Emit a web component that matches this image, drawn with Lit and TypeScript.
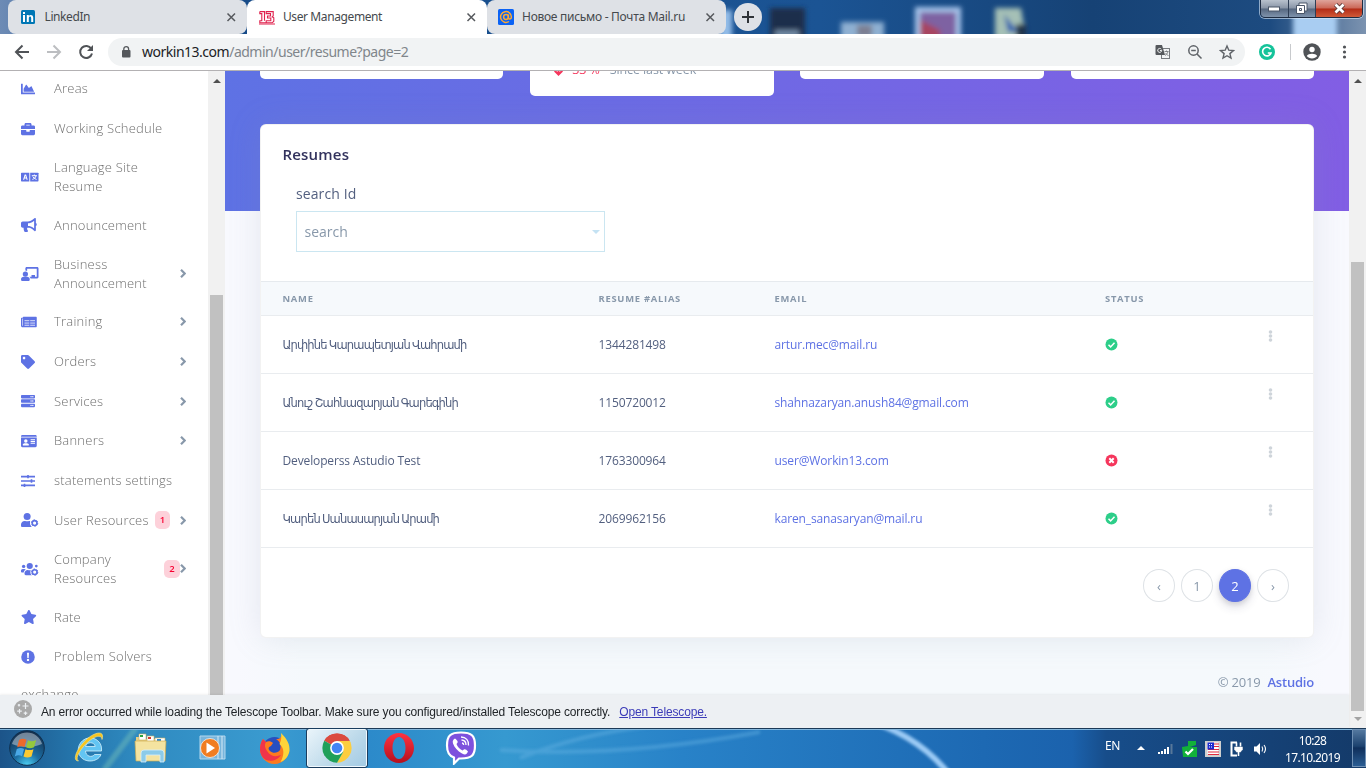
import { LitElement, html, css, svg, nothing } from "lit";
import { customElement, property } from "lit/decorators.js";

const FA_CHART =
  "M500 384c6.6 0 12 5.4 12 12v40c0 6.6-5.4 12-12 12H12c-6.6 0-12-5.4-12-12V76c0-6.6 5.4-12 12-12h40c6.6 0 12 5.4 12 12v308h436zM372.7 159.5L288 216l-85.3-113.7c-5.1-6.8-15.5-6.3-19.9 1L96 248v104h384l-89.9-187.8c-3.2-6.5-11.4-8.7-17.4-4.7z";
const FA_BRIEFCASE =
  "M320 336c0 8.84-7.16 16-16 16h-96c-8.84 0-16-7.16-16-16v-48H0v144c0 25.6 22.4 48 48 48h416c25.6 0 48-22.4 48-48V288H320v48zm144-208h-80V80c0-25.6-22.4-48-48-48H176c-25.6 0-48 22.4-48 48v48H48c-25.6 0-48 22.4-48 48v80h512v-80c0-25.6-22.4-48-48-48zm-144 0H192V96h128v32z";
const FA_BULLHORN =
  "M576 240c0-23.63-12.95-44.04-32-55.12V32.01C544 23.26 537.02 0 512 0c-7.12 0-14.19 2.38-19.98 7.02l-85.03 68.03C364.28 109.19 310.66 128 256 128H64c-35.35 0-64 28.65-64 64v96c0 35.35 28.65 64 64 64h33.7c-1.39 10.48-2.18 21.14-2.18 32 0 39.77 9.26 77.35 25.56 110.94 5.19 10.69 16.52 17.06 28.4 17.06h74.28c26.05 0 41.69-29.84 25.9-50.56-16.4-21.52-26.15-48.36-26.15-77.44 0-11.11 1.62-21.79 4.41-32H256c54.66 0 108.28 18.81 150.98 52.95l85.03 68.03a32.023 32.023 0 0 0 19.98 7.02c24.92 0 32-22.78 32-32V295.13C563.05 284.04 576 263.63 576 240zm-96 141.42l-33.05-26.44C392.95 311.78 325.12 288 256 288v-96c69.12 0 136.95-23.78 190.95-66.98L480 98.58v282.84z";
const FA_TAG =
  "M0 252.118V48C0 21.49 21.49 0 48 0h204.118a48 48 0 0 1 33.941 14.059l211.882 211.882c18.745 18.745 18.745 49.137 0 67.882L293.823 497.941c-18.745 18.745-49.137 18.745-67.882 0L14.059 286.059A48 48 0 0 1 0 252.118zM112 64c-26.51 0-48 21.49-48 48s21.49 48 48 48 48-21.49 48-48-21.49-48-48-48z";
const FA_STAR =
  "M259.3 17.8L194 150.2 47.9 171.5c-26.2 3.8-36.7 36.1-17.7 54.6l105.7 103-25 145.5c-4.5 26.3 23.2 46 46.4 33.7L288 439.6l130.7 68.7c23.2 12.2 50.9-7.4 46.4-33.7l-25-145.5 105.7-103c19-18.5 8.5-50.8-17.7-54.6L382 150.2 316.7 17.8c-11.7-23.6-45.6-23.9-57.4 0z";

const gear = (cx: number, cy: number) => svg`
  <circle cx=${cx} cy=${cy} r="88" fill="none" stroke="currentColor" stroke-width="60"/>
  <circle cx=${cx} cy=${cy} r="116" fill="none" stroke="currentColor" stroke-width="34" stroke-dasharray="61 60.5"/>`;

/* width in em-units of 512 followed by the glyph's drawing */
const ICONS: Record<string, [number, unknown]> = {
  chart: [512, svg`<path d=${FA_CHART}/>`],
  briefcase: [512, svg`<path d=${FA_BRIEFCASE}/>`],
  bullhorn: [576, svg`<path d=${FA_BULLHORN}/>`],
  tag: [512, svg`<path d=${FA_TAG}/>`],
  star: [576, svg`<path d=${FA_STAR}/>`],
  language: [640, svg`<path fill-rule="evenodd" d="M24 96h280v320H24c-13 0-24-11-24-24V120c0-13 11-24 24-24zM135 160L75 352h42l12-40h62l12 40h42l-60-192zm25 50l20 66h-40z"/>
    <path d="M336 96h280c13 0 24 11 24 24v272c0 13-11 24-24 24H336z"/>
    <path d="M395 208h186M488 165v43M550 212c-14 60-66 112-134 132M432 245c30 48 78 84 136 100" fill="none" stroke="#fff" stroke-width="36"/>`],
  teacher: [640, svg`<circle cx="160" cy="256" r="96"/><path d="M224 352h-64H96c-53 0-96 43-96 96 0 40 20 64 40 64h240c22 0 40-24 40-64 0-53-43-96-96-96z"/>
    <path d="M592 0H208c-26 0-48 22-48 49v79c24 0 45 7 64 17V64h352v288h-64v-64H384v64h-76c20 17 35 39 44 64h240c26 0 48-22 48-49V49c0-27-22-49-48-49z"/>`],
  news: [576, svg`<path d="M552 64H88c-13 0-24 11-24 24v8H24c-13 0-24 11-24 24v272c0 31 25 56 56 56h496c13 0 24-11 24-24V88c0-13-11-24-24-24z"/>
    <path d="M56 130v262" stroke="#fff" stroke-width="22"/>
    <path d="M128 208h176M336 208h176M128 295h176M336 295h176M128 375h176M336 375h176" stroke="#fff" stroke-width="28"/>`],
  server: [512, svg`<rect y="32" width="512" height="128" rx="28"/><rect y="192" width="512" height="128" rx="28"/><rect y="352" width="512" height="128" rx="28"/>
    <g fill="#fff"><circle cx="368" cy="96" r="24"/><circle cx="432" cy="96" r="24"/><circle cx="368" cy="256" r="24"/><circle cx="432" cy="256" r="24"/><circle cx="368" cy="416" r="24"/><circle cx="432" cy="416" r="24"/></g>`],
  idcard: [576, svg`<path d="M528 32H48C22 32 0 54 0 80v16h576V80c0-26-22-48-48-48zM0 432c0 26 22 48 48 48h480c26 0 48-22 48-48V128H0z"/>
    <g fill="#fff"><circle cx="176" cy="256" r="64"/><path d="M64 397c0-30 30-58 70-58h84c40 0 70 28 70 58 0 12-5 19-12 19H76c-7 0-12-8-12-19z"/><path d="M352 192h160v32H352zM352 256h160v32H352zM352 320h160v32H352z"/></g>`],
  sliders: [512, svg`<path d="M0 96h512M0 256h512M0 416h512" stroke="currentColor" stroke-width="56"/>
    <path d="M256 36v120M384 196v120M128 356v120" stroke="currentColor" stroke-width="60"/>`],
  usercog: [640, svg`<circle cx="224" cy="128" r="128"/><path d="M313 288h-17a174 174 0 0 1-146 0h-16C60 288 0 348 0 422v42c0 26 22 48 48 48h368c-60-30-90-90-83-222z"/>
    <circle cx="497" cy="368" r="160" fill="#fff"/>${gear(497, 368)}`],
  userscog: [640, svg`<circle cx="96" cy="160" r="62"/><path d="M64 256h64c18 0 35 8 47 20-40 22-70 62-76 108H32c-18 0-32-14-32-32v-32c0-35 29-64 64-64z"/>
    <circle cx="320" cy="144" r="112"/><circle cx="560" cy="150" r="50"/><path d="M396 288h-8a156 156 0 0 1-137 0h-8c-64 0-115 52-115 115v29c0 26 21 48 48 48h290z"/>
    <circle cx="500" cy="370" r="160" fill="#fff"/>${gear(500, 370)}`],
  alert: [512, svg`<circle cx="256" cy="256" r="248"/><path d="M218 105h76l-12 190h-52z" fill="#fff"/><circle cx="256" cy="362" r="44" fill="#fff"/>`],
};

interface NavItem { icon?: string; label: string; lines?: number; arrow?: boolean; badge?: number; }
const NAV: NavItem[] = [
  { icon: "chart", label: "Areas" },
  { icon: "briefcase", label: "Working Schedule" },
  { icon: "language", label: "Language Site Resume", lines: 2 },
  { icon: "bullhorn", label: "Announcement" },
  { icon: "teacher", label: "Business Announcement", lines: 2, arrow: true },
  { icon: "news", label: "Training", arrow: true },
  { icon: "tag", label: "Orders", arrow: true },
  { icon: "server", label: "Services", arrow: true },
  { icon: "idcard", label: "Banners", arrow: true },
  { icon: "sliders", label: "statements settings" },
  { icon: "usercog", label: "User Resources", arrow: true, badge: 1 },
  { icon: "userscog", label: "Company Resources", lines: 2, arrow: true, badge: 2 },
  { icon: "star", label: "Rate" },
  { icon: "alert", label: "Problem Solvers" },
  { label: "exchange" },
];

@customElement("side-nav")
class SideNav extends LitElement {
  static styles = css`
    :host { display: flex; width: 225px; height: 100%; overflow: hidden; background: #fff; }
    .list { width: 208px; height: 100%; margin-top: -2px; flex: none; }
    .item { display: flex; align-items: center; height: 39.7px; padding-left: 21px; box-sizing: border-box; color: #6f6f6f;
      font: 300 13px/19px "Open Sans", sans-serif; letter-spacing: .22px; }
    .item.two { height: 57px; }
    .icon { width: 33px; flex: none; display: flex; color: #5e72e4; }
    .icon svg { height: 14px; fill: currentColor; overflow: visible; }
    .label { width: 94px; flex: none; white-space: nowrap; }
    .two .label { white-space: normal; width: 100px; }
    .end { flex: 1; display: flex; align-items: center; justify-content: flex-end; padding-right: 22px; }
    .badge { width: 15px; height: 18px; border-radius: 5px; background: #fdd1da; color: #f80031; text-align: center;
      font: 600 9.5px/18px "Open Sans", sans-serif; margin-right: 10px; letter-spacing: 0; }
    .two .badge { margin-right: 0; width: 16px; }
    .exchange { height: 35px; }
    .bar { width: 17px; background: #f1f1f1; display: flex; flex-direction: column; align-items: center; }
    .up { width: 0; height: 0; margin: 8px 0 0 0; border: 4px solid transparent; border-top: 0; border-bottom: 4px solid #505050; }
    .thumb { width: 13px; margin-top: 212px; height: 450px; background: #c1c1c1; }
  `;
  render() {
    return html`
      <div class="list">
        ${NAV.map((n) => html`<div class="item ${n.lines ? "two" : ""} ${n.icon ? "" : "exchange"}">
          ${n.icon ? html`<span class="icon"><svg viewBox="0 0 ${ICONS[n.icon][0]} 512">${ICONS[n.icon][1]}</svg></span>` : nothing}
          <span class="label">${n.label}</span>
          <span class="end">
            ${n.badge ? html`<span class="badge">${n.badge}</span>` : nothing}
            ${n.arrow ? html`<svg width="6" height="9" viewBox="0 0 6 9"><path d="M1 .8L4.7 4.5 1 8.2" fill="none" stroke="#8898aa" stroke-width="2.200"/></svg>` : nothing}
          </span>
        </div>`)}
      </div>
      <div class="bar"><i class="up"></i><i class="thumb"></i></div>`;
  }
}

interface Row { name: string; alias: string; email: string; ok: boolean; hy?: boolean; }
const ROWS: Row[] = [
  { name: "Արփինե Կարապետյան Վահրամի", alias: "1344281498", email: "artur.mec@mail.ru", ok: true, hy: true },
  { name: "Անուշ Շահնազարյան Գարեգինի", alias: "1150720012", email: "shahnazaryan.anush84@gmail.com", ok: true, hy: true },
  { name: "Developerss Astudio Test", alias: "1763300964", email: "user@Workin13.com", ok: false },
  { name: "Կարեն Սանասարյան Արամի", alias: "2069962156", email: "karen_sanasaryan@mail.ru", ok: true, hy: true },
];

@customElement("resume-page")
class ResumePage extends LitElement {
  static styles = css`
    :host { display: block; flex: 1; min-width: 0; height: 100%; overflow: hidden; background: #f8f9fe; font-family: "Open Sans", "DejaVu Sans", sans-serif; }
    .hero { height: 140px; padding: 0 35px; box-sizing: border-box; background: linear-gradient(87deg, #5e72e4, #825ee4); }
    .stats { display: grid; grid-template-columns: repeat(4, 243.4px); justify-content: space-between; align-items: start; height: 53px; }
    .stat { height: 8px; background: #fff; border-radius: 0 0 5px 5px; overflow: hidden; }
    .stat.tall { height: 25px; display: flex; padding-left: 24px; font-size: 12.5px; line-height: 16px; color: #8898aa; letter-spacing: -.1px; }
    .tall span { margin-top: -9px; white-space: pre; }
    .tall svg { margin: -7px 9px 0 0; }
    .pct { color: #f5365c; margin-right: 10px; }
    .card { position: relative; z-index: 1; margin: -87px 35px 0; height: 514px; box-sizing: border-box; background: #fff; border: 1px solid rgba(0,0,0,.05); border-radius: 6px;
      box-shadow: 0 0 32px rgba(136,152,170,.18); display: flex; flex-direction: column; }
    .title { margin: 20px 0 0 21.500px; font: 600 15px/18px "Open Sans", sans-serif; color: #32325d; height: 18px; letter-spacing: .2px; }
    .field { margin: 21px 0 29px 35px; width: 309px; height: 68px; }
    .flabel { display: block; height: 27px; font-size: 14px; line-height: 20px; color: #525f7f; letter-spacing: .1px; }
    .select { display: flex; justify-content: space-between; align-items: center; height: 41px; box-sizing: border-box; border: 1px solid #cbe6f1;
      padding: 0 4px 0 7.5px; font-size: 14px; color: #8898aa; }
    .caret { border: 4px solid transparent; border-top: 4px solid #c4e2f3; border-bottom: 0; }
    .row { display: grid; grid-template-columns: 316px 176px 330.5px 162.5px 1fr; padding-left: 21.5px; height: 58px; box-sizing: border-box; align-items: center;
      border-bottom: 1px solid #e9ecef; font-size: 12px; color: #525f7f; letter-spacing: -.13px; }
    .hy { font-size: 11.5px; letter-spacing: -.83px; }
    .head { height: 35px; border-top: 1px solid #e6eaee; background: #f6f9fc; color: #8898aa; font-size: 9.4px; font-weight: 700; letter-spacing: .75px; }
    .mail { color: #5e72e4; }
    .dots { align-self: start; margin-top: 14px; }
    svg { display: block; }
    .pages { display: flex; justify-content: flex-end; gap: 6px; padding: 21px 24px 0 0; }
    .page { width: 32px; height: 33px; border: 1px solid #dee2e6; border-radius: 50%; box-sizing: border-box; display: grid; place-items: center; color: #8898aa; font-size: 13px; line-height: 16px; }
    .page.on { background: #5e72e4; border-color: #5e72e4; color: #fff; box-shadow: 0 5px 10px rgba(50,50,93,.16), 0 2px 5px rgba(0,0,0,.1); }
    .foot { padding: 35px 35px 0; height: 90px; display: flex; justify-content: flex-end; gap: 7px; box-sizing: border-box; font-size: 13px; line-height: 19px; color: #8898aa; letter-spacing: -.2px;
      background: linear-gradient(90deg, rgba(245,249,252,0) 1%, #f5f9fc 7%, #f5f9fc 92%, rgba(245,249,252,0) 98%); }
    .foot b { font-weight: 600; color: #5e72e4; }
  `;
  render() {
    return html`
      <div class="hero">
        <div class="stats">
          <div class="stat"></div>
          <div class="stat tall">
            <svg width="9" height="12" viewBox="0 0 9 12"><path d="M4.5 12L0 7.5 1.3 6.2 3.6 8V0h1.8v8l2.300-1.800L9 7.500z" fill="#f5365c"/></svg>
            <span class="pct">33 %</span><span>Since last week</span>
          </div>
          <div class="stat"></div>
          <div class="stat"></div>
        </div>
      </div>
      <div class="card">
        <div class="title">Resumes</div>
        <div class="field">
          <span class="flabel">search Id</span>
          <div class="select"><span>search</span><i class="caret"></i></div>
        </div>
        <div class="row head"><span>NAME</span><span>RESUME #ALIAS</span><span>EMAIL</span><span>STATUS</span></div>
        ${ROWS.map((r) => html`<div class="row">
          <span class=${r.hy ? "hy" : ""}>${r.name}</span><span>${r.alias}</span><span class="mail">${r.email}</span>
          <svg width="13" height="13" viewBox="0 0 13 13"><circle cx="6.500" cy="6.500" r="6" fill=${r.ok ? "#2dce89" : "#f5365c"}/>
            <path d=${r.ok ? "M3.500 6.800L5.600 8.900 9.500 4.700" : "M4.300 4.300L8.700 8.700M8.700 4.300L4.300 8.700"} fill="none" stroke="#fff" stroke-width=${r.ok ? 1.5 : 2}/></svg>
          <svg class="dots" width="5" height="12" viewBox="0 0 5 12" fill="#ced4da"><circle cx="2.500" cy="2" r="1.800"/><circle cx="2.500" cy="6" r="1.800"/><circle cx="2.500" cy="10" r="1.800"/></svg>
        </div>`)}
        <div class="pages"><span class="page">‹</span><span class="page">1</span><span class="page on">2</span><span class="page">›</span></div>
      </div>
      <div class="foot"><span>© 2019</span><b>Astudio</b></div>`;
  }
}

@customElement("browser-tab")
class BrowserTab extends LitElement {
  @property() label = "";
  @property() kind = "";
  static styles = css`
    :host { display: flex; align-items: center; width: 239.500px; height: 34px; box-sizing: border-box; padding: 0 10px 0 13px; background: #dee1e6; border-radius: 8px; flex: none; }
    :host([kind="w13"]) { background: #fff; border-radius: 8px 8px 0 0; padding-left: 12px; }
    :host([kind="mail"]) { padding-left: 11.500px; }
    svg { flex: none; }
    .t { flex: 1; padding-left: 7px; font: 12px/16px "Noto Sans", "Open Sans", sans-serif; letter-spacing: -.4px; color: #45494d; white-space: nowrap; }
    :host([kind="mail"]) .t { letter-spacing: -.28px; }
  `;
  favicon() {
    if (this.kind === "in")
      return svg`<rect x="0" y="1" width="14" height="14" rx="1.500" fill="#0077b5"/><g fill="#fff"><rect x="2" y="6" width="2" height="7"/><rect x="2" y="3" width="2" height="2"/><path d="M5.800 6h2v1c1-1.600 4.400-1.600 4.400 1.600V13h-2V9.200c0-2.200-2.400-2-2.400 0V13h-2z"/></g>`;
    if (this.kind === "w13")
      return svg`<path d="M.8 2.600h4.700v9.200M.8 2.600v2h2v7.200H.8v2h6M7.200 2.600h7v4.200l-1 1 1.600 1v3.400l-1.600 1.600H7.200v-2h4.600V9H8.500V7h3V4.600H7.200z" fill="#fff" stroke="#e0224e" stroke-width="1.100"/><path d="M0 15h16" stroke="#e0224e"/>`;
    return svg`<rect width="16" height="16" rx="1.500" fill="#0a62f5"/><g fill="none" stroke="#ffa930" stroke-width="1.500"><circle cx="8" cy="8" r="2.400"/><path d="M10.400 5.500v3c0 2.400 3 2 3-.5a5.400 5.400 0 1 0-2.400 4.500"/></g>`;
  }
  render() {
    return html`<svg width="17" height="16" viewBox="0 0 17 16">${this.favicon()}</svg><span class="t">${this.label}</span>
      <svg width="11" height="11" viewBox="0 0 11 11"><path d="M1.500 1.500l7.500 7.500M9 1.500L1.500 9" stroke="#55585c" stroke-width="1.500"/></svg>`;
  }
}

@customElement("browser-chrome")
class BrowserChrome extends LitElement {
  static styles = css`
    :host { display: block; flex: none; }
    .top { display: grid; height: 34px; overflow: hidden; }
    .top > * { grid-area: 1 / 1; }
    .strip { display: flex; align-items: center; padding-left: 7.500px; }
    .plus { width: 28px; height: 28px; border-radius: 50%; background: #dee1e6; margin-left: 8px; display: grid; place-items: center; }
    .win { margin: 0 3px auto auto; display: flex; height: 17px; border: 1px solid #1e2c42; border-top: 0; border-radius: 0 0 5px 5px; overflow: hidden; box-shadow: 0 0 0 1px rgba(220,235,250,.6); }
    .win span { width: 26.500px; border-right: 1px solid #2f3e55; display: grid; place-items: center; background: linear-gradient(#b8c1cd, #8894a6 48%, #56677f 52%, #7f93ac); }
    .win .x { width: 46px; border: 0; background: linear-gradient(#dfa49b, #cb6757 48%, #b32c17 52%, #d05a38); }
    .bar { height: 36px; background: #fff; display: flex; align-items: center; border-bottom: 1px solid #b3b1b3; }
    .bar svg { flex: none; }
    .btns { display: flex; gap: 16px; padding-left: 14px; width: 108px; box-sizing: border-box; }
    .url { width: 1137px; box-sizing: border-box; height: 28px; border-radius: 14px; background: #f1f3f4; display: flex; align-items: center; gap: 16px; padding: 0 10px 0 11px; }
    .addr { flex: 1; margin-left: -7px; font: 14px/20px "Noto Sans", "Open Sans", sans-serif; letter-spacing: -.49px; color: #80868b; }
    .addr b { font-weight: 400; color: #202124; }
    .ext { display: flex; align-items: center; padding-left: 14px; }
    .sep { width: 1px; height: 16px; background: #c8cacd; margin: 0 12px 0 15px; }
    .more { margin-left: 21px; }
  `;
  render() {
    return html`
      <div class="top">
        <svg width="1366" height="34">
          <defs>
            <linearGradient id="sky"><stop offset="0" stop-color="#6d8bb5"/><stop offset=".02" stop-color="#5d7fae"/><stop offset=".18" stop-color="#174b88"/><stop offset=".6" stop-color="#1b5494"/><stop offset=".8" stop-color="#164275"/><stop offset=".93" stop-color="#1d4b80"/><stop offset="1" stop-color="#7c93b0"/></linearGradient>
            <filter id="soft" filterUnits="userSpaceOnUse" x="680" y="-10" width="690" height="60"><feGaussianBlur stdDeviation="2.800"/></filter>
          </defs>
          <rect width="1366" height="34" fill="url(#sky)"/>
          <g filter="url(#soft)">
            <rect x="720" y="10" width="12" height="34" fill="#93bce8"/>
            <rect x="770" y="8" width="35" height="36" fill="#1c2f4b"/><rect x="775" y="30" width="24" height="8" fill="#7088a3"/>
            <rect x="841" y="22" width="43" height="22" fill="#8fb0d2"/><rect x="857" y="25" width="15" height="12" fill="#7c7f92"/>
            <rect x="915" y="7" width="46" height="40" fill="#a8c6ec"/><rect x="920" y="12" width="36" height="30" fill="#7e62a2"/><path d="M920 20l20 10v10h-20z" fill="#a74461"/>
            <path d="M995 8h26l6 36h-32z" fill="#a5c0b6"/><path d="M1004 14l14 18h-10z" fill="#2c5fae"/><rect x="1016" y="24" width="10" height="20" fill="#22354c"/>
            <rect x="1293" y="14" width="44" height="30" fill="#a9cdf2"/>
          </g>
        </svg>
        <div class="strip">
          <browser-tab kind="in" label="LinkedIn"></browser-tab>
          <browser-tab kind="w13" label="User Management"></browser-tab>
          <browser-tab kind="mail" label="Новое письмо - Почта Mail.ru"></browser-tab>
          <div class="plus"><svg width="14" height="14"><path d="M7 1v12M1 7h12" stroke="#2f3337" stroke-width="2"/></svg></div>
          <div class="win">
            <span><svg width="12" height="6"><rect x=".5" y="1" width="11" height="4" fill="#fff" stroke="#4a5668"/></svg></span>
            <span><svg width="13" height="13"><g fill="#fff" stroke="#4a5668" fill-rule="evenodd"><path d="M4 1h8v8H4z"/><path d="M1.500 3.500h8v8h-8zM4.500 6.500v2h2v-2z"/></g></svg></span>
            <span class="x"><svg width="13" height="11"><path d="M2.500 1.500l8 8M10.500 1.500l-8 8" stroke="#5b3a3a" stroke-width="4.500"/><path d="M2.500 1.500l8 8M10.500 1.500l-8 8" stroke="#fff" stroke-width="2.700"/></svg></span>
          </div>
        </div>
      </div>
      <div class="bar">
        <div class="btns">
          <svg width="16" height="16"><path d="M15 8H2M8.500 1.500L2 8l6.500 6.500" fill="none" stroke="#505357" stroke-width="2"/></svg>
          <svg width="16" height="16"><path d="M1 8h13M7.500 1.500L14 8l-6.500 6.500" fill="none" stroke="#bcbec1" stroke-width="2"/></svg>
          <svg width="16" height="16"><path d="M13.300 4.800A6 6 0 1 0 14 9.500" fill="none" stroke="#505357" stroke-width="2"/><path d="M15 1v6H9z" fill="#505357"/></svg>
        </div>
        <div class="url">
          <svg width="14" height="14" viewBox="0 0 14 14"><rect x="3" y="5" width="8.500" height="7.500" rx="1" fill="#55585c"/><path d="M4.800 6V4a2.400 2.400 0 0 1 4.800 0v2" fill="none" stroke="#55585c" stroke-width="1.300"/></svg>
          <span class="addr"><b>workin13.com</b>/admin/user/resume?page=2</span>
          <svg width="16" height="16"><rect x="6.500" y="4.500" width="8" height="10" fill="#f1f3f4" stroke="#777a7e"/><path d="M1.500 1h5.500l3 10H1.500a1 1 0 0 1-1-1V2a1 1 0 0 1 1-1z" fill="#55585c"/><path d="M6.300 5.200A2 2 0 1 0 6.700 6.500H5" fill="none" stroke="#f1f3f4"/><path d="M9.500 7.500h4M11.500 6.500v1M13 7.500c-.5 2-1.500 3-3 4M10.500 9l3 3" fill="none" stroke="#777a7e" stroke-width=".9"/></svg>
          <svg width="16" height="16"><circle cx="6.500" cy="6.500" r="4.700" fill="none" stroke="#5f6368" stroke-width="1.500"/><path d="M10 10l4.500 4.500M4.200 6.500h4.600" stroke="#5f6368" stroke-width="1.500"/></svg>
          <svg width="16" height="16"><path d="M8 2l1.800 4.200 4.600.4-3.500 3 1.100 4.500L8 11.700l-4 2.400 1.100-4.500-3.500-3 4.600-.4z" fill="none" stroke="#5f6368" stroke-width="1.400"/></svg>
        </div>
        <div class="ext">
          <svg width="16" height="16"><circle cx="8" cy="8" r="8" fill="#15c39a"/><path d="M11.500 5.200A4.300 4.300 0 1 0 12 9H8.800" fill="none" stroke="#fff" stroke-width="1.600"/></svg>
          <i class="sep"></i>
          <svg width="18" height="18"><circle cx="9" cy="9" r="8.700" fill="#505357"/><circle cx="9" cy="6.500" r="2.700" fill="#fff"/><path d="M3.800 13c1.500-3 8.900-3 10.400 0-2.300 3.200-8.100 3.200-10.400 0z" fill="#fff"/></svg>
          <svg class="more" width="5" height="14" fill="#505357"><circle cx="2.500" cy="2" r="1.600"/><circle cx="2.500" cy="7" r="1.600"/><circle cx="2.500" cy="12" r="1.600"/></svg>
        </div>
      </div>`;
  }
}

@customElement("task-bar")
class TaskBar extends LitElement {
  static styles = css`
    :host { display: grid; height: 40px; flex: none; overflow: hidden; }
    .wall, .row { grid-area: 1 / 1; min-width: 0; }
    .row { display: flex; align-items: center; height: 40px; }
    .start { width: 49px; padding-left: 9px; display: flex; }
    .app { width: 62px; height: 40px; display: grid; place-items: center; flex: none; }
    .app.on { width: 60px; height: 38px; margin: 1px 1px; box-sizing: border-box; border: 1px solid #f0f8fd; outline: 1px solid #1b3d5e; border-radius: 2px; background: linear-gradient(135deg, #e9f4fa, #bcd9ea 60%, #a3cbe4); }
    .tray { margin-left: auto; display: flex; align-items: center; color: #fff; font: 12px/17px "Noto Sans", "Open Sans", sans-serif; height: 40px; }
    .en { width: 37px; text-align: center; margin: 0 1px 5px 0; letter-spacing: -.5px; }
    .tri { width: 18px; margin-right: 3px; display: grid; place-items: center; }
    .tri i { border: 4px solid transparent; border-top: 0; border-bottom: 4px solid #fff; }
    .ic { width: 24px; display: grid; place-items: center; margin-top: 2px; }
    .clock { width: 79px; text-align: center; letter-spacing: -.65px; padding-top: 1px; }
    .desk { width: 14px; height: 38px; border: 1px solid #6f90b4; box-sizing: border-box; background: linear-gradient(#54789f, #1c426f 45%, #0f2f5b 50%, #2a5d93); }
  `;
  render() {
    return html`
      <svg class="wall" width="1366" height="40">
        <defs>
          <linearGradient id="bg"><stop offset="0" stop-color="#1c5489"/><stop offset=".05" stop-color="#2473a9"/><stop offset=".1" stop-color="#2f8ac0"/><stop offset=".2" stop-color="#3a9bd0"/><stop offset=".27" stop-color="#2c8aca"/><stop offset=".37" stop-color="#3699d0"/><stop offset=".5" stop-color="#2882c8"/><stop offset=".72" stop-color="#1d69b3"/><stop offset=".785" stop-color="#1b62ad"/><stop offset=".81" stop-color="#174d8a"/><stop offset="1" stop-color="#143a69"/></linearGradient>
          <filter id="b" filterUnits="userSpaceOnUse" x="0" y="-20" width="1366" height="80"><feGaussianBlur stdDeviation="1.800"/></filter>
        </defs>
        <rect width="1366" height="40" fill="url(#bg)"/>
        <g fill="none" filter="url(#b)"><path d="M872 -6Q922 10 952 50" stroke="#9ccbf5" stroke-width="6"/><path d="M520 30Q580 6 650 -2M500 22Q620 30 760 4" stroke="#67b1e3" stroke-width="4" opacity=".45"/><path d="M104 42L136 0" stroke="#80c7b8" stroke-width="6" opacity=".4"/></g>
        <path d="M0 .5h1366" stroke="#1d3a58"/><path d="M0 1.500h1366" stroke="#83b7dd"/>
      </svg>
      <div class="row">
        <div class="start"><svg width="36" height="36" viewBox="0 0 36 36">
          <defs><radialGradient id="orb2" cx=".5" cy="1" r=".95"><stop offset="0" stop-color="#4ed2f5"/><stop offset=".4" stop-color="#1b6ea3"/><stop offset="1" stop-color="#15304f"/></radialGradient></defs>
          <circle cx="18" cy="18" r="17.300" fill="url(#orb2)" stroke="#0f2f4d"/><path d="M3 14a15.500 15.500 0 0 1 30 0c-9 4-21 4-30 0z" fill="#fff" opacity=".4"/>
          <path d="M10 10c3-2 5-1.500 7.500-.3L15.500 17c-2.500-1.200-4.500-1-7.300.3z" fill="#ec6a2c"/><path d="M19 10.200c2.500 1.400 5 1.300 8.200-.2L25 17.300c-3 1.300-5.500 1.200-8 0z" fill="#94c83d"/>
          <path d="M7.800 19c2.800-1.300 5-1.200 7.300 0L13 26.200c-2.300-1.300-4.500-1.200-7.200.2z" fill="#4aa8e6"/><path d="M16.500 19.200c2.500 1.200 5 1.200 8 0l-2 7.200c-3 1.400-5.500 1.300-8 0z" fill="#fbc932"/></svg></div>
        <div class="app"><svg width="32" height="32" viewBox="0 0 32 32"><path d="M28.500 19H12.500c.3 5.500 6.500 7 9 3.500h6.500C25 31 8.500 32 5.500 20.500 3.500 10 14 3.500 21 6.500c6 2.500 8 7 7.500 12.500zM12.500 14.500h9.700c-.6-5-8.700-5-9.700 0z" fill="#63c5f3" stroke="#d6f2fd" stroke-width=".8"/><path d="M5.500 29C-2.500 29 6 13 14.500 6.500 23-.5 32-1.500 29 7.500c0-5-6.500-4-13.500 2C8.500 15.500 1 26.500 5.500 29z" fill="#f7c51f" stroke="#fbe68a" stroke-width=".6"/></svg></div>
        <div class="app"><svg width="34" height="32" viewBox="0 0 34 32"><path d="M2 5h9l1 2h11l1 2h7v20H2z" fill="#e9d184"/><path d="M5 2h7v6H5zM13 4h7v6h-7zM21 6h10v6H21z" fill="#fff" stroke="#c9b363" stroke-width=".6"/><rect x="6" y="3" width="3" height="2" fill="#2ca33d"/><rect x="14" y="5" width="3" height="2" fill="#d63a2f"/><rect x="23" y="7" width="4" height="2" fill="#2789d6"/><path d="M1 9h31l-1 20H2z" fill="#f4e3a0" stroke="#cfae52" stroke-width=".7"/><path d="M7 21q0-3 3-3h17q3 0 3 3v9h-4v-7H12v7H7z" fill="#8ccbe9" stroke="#d8effa" stroke-width=".8"/></svg></div>
        <div class="app"><svg width="30" height="28" viewBox="0 0 30 28"><path d="M2 2h25v23H2z" fill="#78b5dc" stroke="#b4d8ee"/><path d="M20 2v23M24 2v23" stroke="#d4eaf6"/><circle cx="12" cy="14" r="9.500" fill="#f07d22" stroke="#fff" stroke-width=".7"/><path d="M8.500 8.500l8.500 5.500-8.500 5.500z" fill="#fff"/></svg></div>
        <div class="app"><svg width="32" height="32" viewBox="0 0 32 32"><circle cx="15.500" cy="17" r="12" fill="#284fc0"/><path d="M1 17C1 13 2 10 4 7l3 3c2-1 5-1 7 1l-2 3c-3 1-3 3-1 5 3 3 8 2 10-1 2-6-1-9-4-11 3 0 4 0 6-4 5 5 7 10 7 14 0 8-6 15-14.500 15S1 25 1 17z" fill="#fd7a1f"/><path d="M1 17C1 13 2 10 4 7l3 3c-2 3-1 6 1 9 4 6 9 6 14 4-3 5-10 7-15 5-4-2-6-7-6-11z" fill="#f0344a"/><path d="M22 1c6 6 9 11 8.500 18-1 5-4 9-9 11 4-7 4-14-1-18 2-4 2-7 1.500-11z" fill="#ffd43a"/></svg></div>
        <div class="app on"><svg width="30" height="30" viewBox="0 0 30 30"><path d="M15 15L2.300 7.700A14.700 14.700 0 0 1 27.700 7.700H15z" fill="#db4b3f"/><path d="M15 15l12.700-7.300A14.700 14.700 0 0 1 15 29.700l6.300-11z" fill="#fccd3f"/><path d="M15 15l6.300 3.700L15 29.700A14.700 14.700 0 0 1 2.300 7.700z" fill="#1fa05a"/><path d="M15 8h12.800l.8 1.500L20 18z" fill="#fccd3f"/><path d="M2.300 7.700A14.700 14.700 0 0 1 27.700 7.700L15 8z" fill="#db4b3f"/><circle cx="15" cy="15" r="6.900" fill="#fff"/><circle cx="15" cy="15" r="5.300" fill="#4285f4"/></svg></div>
        <div class="app"><svg width="30" height="32" viewBox="0 0 30 32"><defs><linearGradient id="op" x2="0" y2="1"><stop stop-color="#ff3340"/><stop offset="1" stop-color="#b5101e"/></linearGradient></defs><path fill-rule="evenodd" d="M15 1c8.300 0 15 6.700 15 15s-6.700 15-15 15S0 24.300 0 16 6.700 1 15 1zm0 4c-4 0-6.500 5-6.500 11S11 27 15 27s6.500-5 6.500-11S19 5 15 5z" fill="url(#op)"/></svg></div>
        <div class="app"><svg width="32" height="34" viewBox="0 0 32 34"><path d="M16 1.500c10.500 0 14 3 14 13s-3.500 13-14 13h-2L9 32.500v-6c-5-1.500-7-5-7-12 0-10 3.500-13 14-13z" fill="#7d51dd" stroke="#fff" stroke-width="2.200"/><path d="M10 7.500c3 2.500 3.500 3.500 1.500 5.500 1 3 3 5 6 6.500 2.500-2 3-1.500 5.500 1-1.500 3.500-3 3.500-6 2-4.500-2.500-7.500-6-9-10-.8-2.500.2-4 2-5z" fill="#fff"/><path d="M16 6c5 0 8 3.500 7.500 8.500M16.500 9c3 .2 4.500 2 4.500 5M17 12c1 .1 1.700.7 1.700 2" fill="none" stroke="#fff" stroke-width="1.300"/></svg></div>
        <div class="tray">
          <span class="en">EN</span>
          <span class="tri"><i></i></span>
          <span class="ic"><svg width="16" height="13" fill="#fff"><rect x="1" y="9" width="2" height="2"/><rect x="4" y="8" width="2" height="3"/><rect x="7" y="6" width="2" height="5"/><rect x="10" y="4" width="2" height="7"/><rect x="13.500" y="1" width="2" height="10" fill="#577799"/></svg></span>
          <span class="ic"><svg width="17" height="18"><path d="M1 7l6-1V1h8v4l-6 2h7v10H2z" fill="#12b13a"/><path d="M4.500 11.500l2.500 2.500 5-5" fill="none" stroke="#fff" stroke-width="2.200"/></svg></span>
          <span class="ic"><svg width="16" height="16"><rect width="16" height="16" fill="#cfcfcf"/><rect x="2.500" y="1.500" width="11" height="12" fill="#fff"/><path d="M3 8.500h11M3 11h11M8 3h6M8 5.500h6M3 13.500h11" stroke="#e02a3f" stroke-width="1.200"/><rect x="2.500" y="1.500" width="6.500" height="7" fill="#1c2bd0"/><path d="M4 3.500h4M4 6h4" stroke="#fff" stroke-dasharray="1 1"/></svg></span>
          <span class="ic"><svg width="16" height="16"><path d="M8 1.500H2.500v13H8" fill="none" stroke="#fff" stroke-width="2"/><path d="M5 5.500h9v3l-2.500 3h-4L5 8.500z" fill="#fff" stroke="#1c4270" stroke-width=".6"/><path d="M7.500 1.500v4M11.500 1.500v4M9.500 11v4" stroke="#fff" stroke-width="1.600"/></svg></span>
          <span class="ic"><svg width="16" height="16"><path d="M1 5.500h2.500L7 2v12L3.500 10.500H1z" fill="#fff"/><path d="M9 5.500q1.500 2.500 0 5M11 4q3 4 0 8" fill="none" stroke="#fff" stroke-width="1.100"/></svg></span>
          <span class="clock">10:28<br>17.10.2019</span>
          <span class="desk"></span>
        </div>
      </div>`;
  }
}

@customElement("app-root")
class AppRoot extends LitElement {
  static styles = css`
    :host { display: flex; flex-direction: column; width: 1366px; height: 768px; overflow: hidden; }
    .view { flex: 1; min-height: 0; display: flex; position: relative; }
    .scroll { width: 17px; background: #f1f1f1; display: flex; flex-direction: column; align-items: center; flex: none; }
    .up { margin-top: 8px; border: 4px solid transparent; border-top: 0; border-bottom: 4px solid #505050; }
    .thumb { width: 13px; margin-top: 179px; height: 449px; background: #c1c1c1; }
    .down { margin-top: 6px; border: 4px solid transparent; border-bottom: 0; border-top: 4px solid #a3a3a3; }
    .tele { position: absolute; z-index: 2; left: 0; bottom: 0; width: 1349px; height: 33px; background: #edf0f3; display: flex; align-items: center; box-sizing: border-box; padding-left: 14px;
      font: 12px/16px "Liberation Sans", Arial, sans-serif; color: #212529; letter-spacing: -.147px; box-shadow: 0 -1px 2px rgba(0,0,0,.06); white-space: nowrap; }
    .tele svg { margin: -6px 9px 0 0; }
    .tele u { margin-left: 9px; color: #3b3bb8; }
  `;
  render() {
    return html`
      <browser-chrome></browser-chrome>
      <div class="view">
        <side-nav></side-nav>
        <resume-page></resume-page>
        <div class="scroll"><i class="up"></i><i class="thumb"></i><i class="down"></i></div>
        <div class="tele">
          <svg width="18" height="18"><circle cx="9" cy="9" r="9" fill="#a9a9a9"/><path d="M11.500 3v6M8.500 6h6M5.500 9v4.500M3.200 11.200h4.600M11.500 11.500v3.500M9.700 13.200h3.600M5 4v2.400M3.800 5.200h2.400" stroke="#edf0f3" stroke-width="1.200"/></svg>
          <span>An error occurred while loading the Telescope Toolbar. Make sure you configured/installed Telescope correctly.</span>
          <u>Open Telescope.</u>
        </div>
      </div>
      <task-bar></task-bar>`;
  }
}
